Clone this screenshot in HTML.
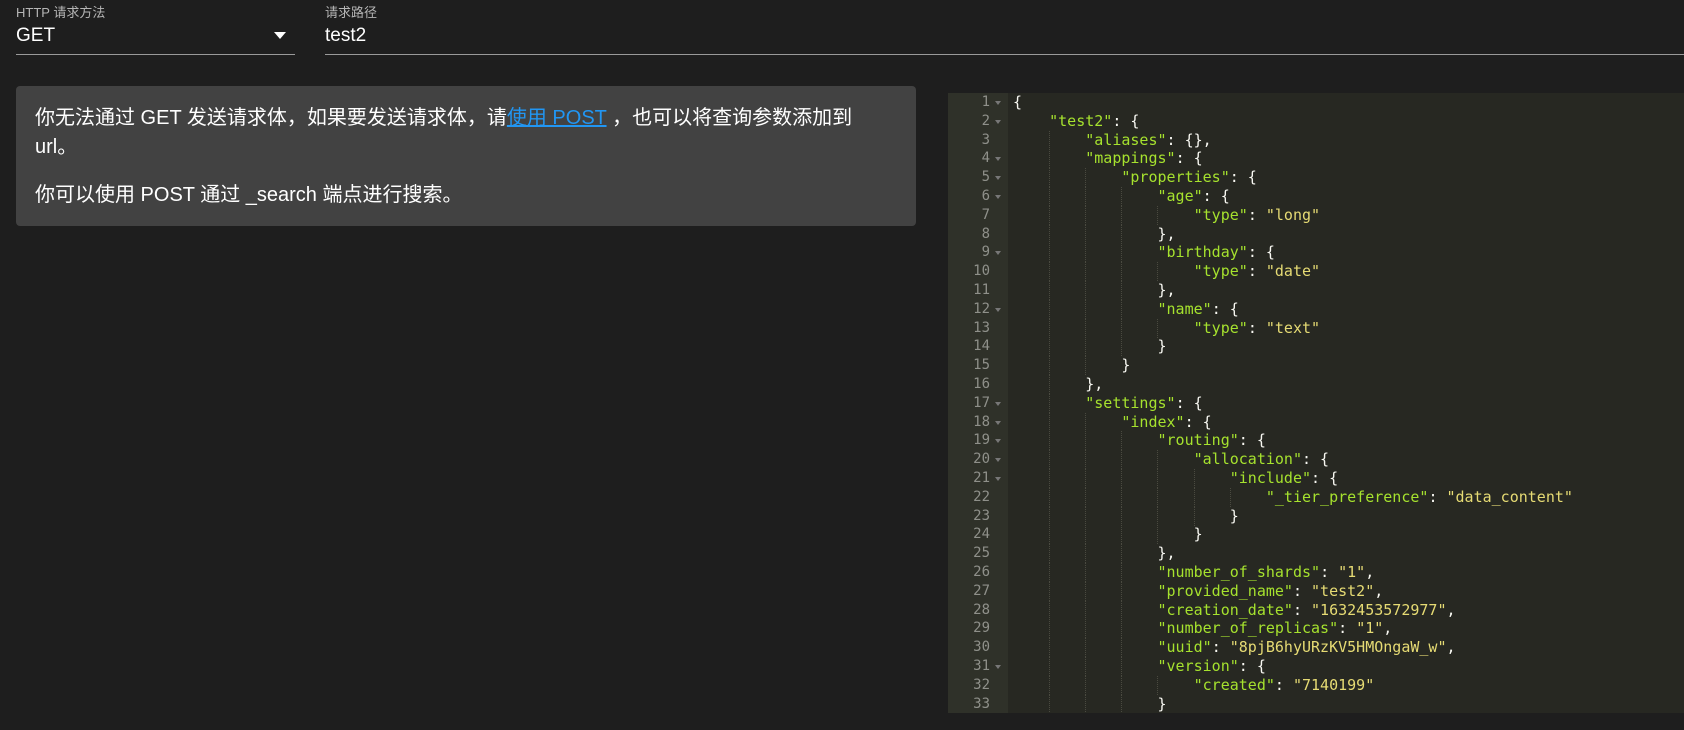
<!DOCTYPE html>
<html><head><meta charset="utf-8"><style>
html,body{margin:0;padding:0;width:1684px;height:730px;background:#1e1e1e;overflow:hidden;font-family:"Liberation Sans","Noto Sans CJK SC",sans-serif;color:#fff}
.lbl{position:absolute;top:2px;font-size:13px;color:#b5b5b5}
.val{position:absolute;top:25px;font-size:19px;color:#fff}
.ul{position:absolute;top:54px;height:1px;background:#9a9a9a}
.card{position:absolute;left:16px;top:86px;width:900px;height:140px;background:#424242;border-radius:4px}
.card p{margin:0;position:absolute;left:19px;font-size:20px;color:#fff;width:830px;line-height:29px;font-weight:normal}
.card a{color:#2196f3;text-decoration:underline}
.ed{position:absolute;left:948px;top:93px;width:736px;height:620px;background:#272822;overflow:hidden}
.gut{position:absolute;left:0;top:0;width:60px;height:100%;background:#2f3129}
.gl{position:absolute;left:0;width:42px;text-align:right;color:#8f908a;font-family:"DejaVu Sans Mono",monospace;font-size:14px}
.fold{position:absolute;left:47px;width:0;height:0;border-left:3px solid transparent;border-right:3px solid transparent;border-top:4px solid #777}
.code{position:absolute;left:65px;top:0;font-family:"DejaVu Sans Mono",monospace;font-size:15px;color:#f8f8f2;white-space:pre}
.ln{position:absolute;left:0;height:19px;line-height:19px}
.k{color:#a6e22e}.s{color:#e6db74}
.guide{position:absolute;width:0;border-left:1px dotted #4a4a40}
</style></head><body>
<div class="lbl" style="left:16px">HTTP 请求方法</div>
<div class="val" style="left:16px">GET</div>
<div style="position:absolute;left:274px;top:32px;border-left:6px solid transparent;border-right:6px solid transparent;border-top:7px solid #fff"></div>
<div class="ul" style="left:16px;width:279px"></div>
<div class="lbl" style="left:325px">请求路径</div>
<div class="val" style="left:325px">test2</div>
<div class="ul" style="left:325px;width:1359px"></div>
<div class="card">
<p style="top:18px">你无法通过 GET 发送请求体，如果要发送请求体，请<a>使用 POST</a> ，也可以将查询参数添加到 url。</p>
<p style="top:95px">你可以使用 POST 通过 _search 端点进行搜索。</p>
</div>
<div class="ed"><div class="gut" id="g"></div><div class="code" id="c"></div></div>
<script>
var L=[
[0,'{'],[1,'<span class="k">"test2"</span>: {'],[2,'<span class="k">"aliases"</span>: {},'],[2,'<span class="k">"mappings"</span>: {'],
[3,'<span class="k">"properties"</span>: {'],[4,'<span class="k">"age"</span>: {'],[5,'<span class="k">"type"</span>: <span class="s">"long"</span>'],[4,'},'],
[4,'<span class="k">"birthday"</span>: {'],[5,'<span class="k">"type"</span>: <span class="s">"date"</span>'],[4,'},'],
[4,'<span class="k">"name"</span>: {'],[5,'<span class="k">"type"</span>: <span class="s">"text"</span>'],[4,'}'],[3,'}'],[2,'},'],
[2,'<span class="k">"settings"</span>: {'],[3,'<span class="k">"index"</span>: {'],[4,'<span class="k">"routing"</span>: {'],
[5,'<span class="k">"allocation"</span>: {'],[6,'<span class="k">"include"</span>: {'],[7,'<span class="k">"_tier_preference"</span>: <span class="s">"data_content"</span>'],
[6,'}'],[5,'}'],[4,'},'],[4,'<span class="k">"number_of_shards"</span>: <span class="s">"1"</span>,'],
[4,'<span class="k">"provided_name"</span>: <span class="s">"test2"</span>,'],[4,'<span class="k">"creation_date"</span>: <span class="s">"1632453572977"</span>,'],
[4,'<span class="k">"number_of_replicas"</span>: <span class="s">"1"</span>,'],[4,'<span class="k">"uuid"</span>: <span class="s">"8pjB6hyURzKV5HMOngaW_w"</span>,'],
[4,'<span class="k">"version"</span>: {'],[5,'<span class="k">"created"</span>: <span class="s">"7140199"</span>'],[4,'}'],[3,'}']];
var folds=[1,2,4,5,6,9,12,17,18,19,20,21,31];
var lh=18.8,cw=9.03,g='',c='';
for(var i=0;i<L.length;i++){var y=i*lh;
g+='<div class="gl" style="top:'+y+'px;height:19px;line-height:19px">'+(i+1)+'</div>';
if(folds.indexOf(i+1)>=0)g+='<div class="fold" style="top:'+(y+8)+'px"></div>';
c+='<div class="ln" style="top:'+y+'px">'+'    '.repeat(L[i][0])+L[i][1]+'</div>';
for(var d=1;d<L[i][0];d++)c+='<div class="guide" style="left:'+(d*4*cw)+'px;top:'+y+'px;height:19px"></div>';}
document.getElementById('g').innerHTML=g;document.getElementById('c').innerHTML=c;
</script>
</body></html>
